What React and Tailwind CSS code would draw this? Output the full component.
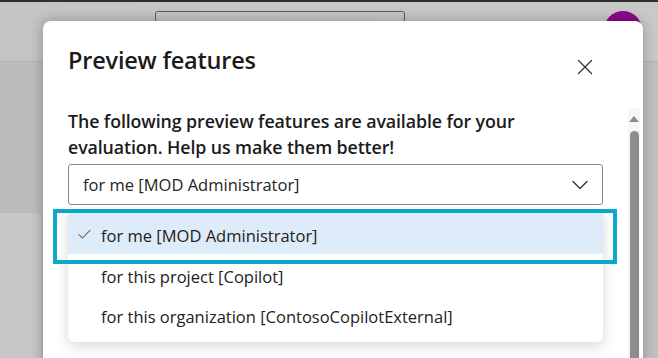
import { Check, ChevronDown, X } from "lucide-react";

const options = [
  "for me [MOD Administrator]",
  "for this project [Copilot]",
  "for this organization [ContosoCopilotExternal]",
];

const font = { fontFamily: '"Open Sans", "Noto Sans", Arial, sans-serif' };

export default function App() {
  return (
    <div
      className="relative w-[658px] h-[358px] overflow-hidden bg-[#c2c2c2]"
      style={font}
    >
      {/* dimmed page behind the dialog */}
      <div className="flex flex-col h-full">
        <div className="h-[2px] bg-[#2e2e2e]" />
        <div className="flex items-start h-[59px] bg-gradient-to-r from-[#c4c4c4] to-[#c9c9c9] pt-[9px]">
          <div className="ml-[155px] w-[250px] h-[40px] rounded-[3px] border border-[#5c5c5c]" />
          <div className="ml-auto mr-[16px] w-[38px] h-[38px] rounded-full bg-[#8a0a8a]" />
        </div>
        <div className="h-px bg-[#b4b4b4]" />
        <div className="flex-1 bg-gradient-to-r from-[#bcbcbc] to-[#c1c1c1] pt-[151px]">
          <div className="w-[41px] h-full rounded-tr-[6px] bg-[#c7c7c7]" />
        </div>
      </div>

      {/* dialog */}
      <div className="absolute left-[43px] top-[21px] w-[600px] h-[360px] bg-white rounded-t-[8px] shadow-[0_0_14px_rgba(0,0,0,0.28)] flex flex-col">
        <div className="flex justify-between items-start pl-[25px] pr-[45px] pt-[23px] h-[87px]">
          <h2 className="text-[23.5px] leading-8 font-semibold text-[#1b1b1b] tracking-[-0.2px]">
            Preview features
          </h2>
          <button className="mt-[10px] text-[#333]">
            <X size={26} strokeWidth={1.1} />
          </button>
        </div>

        <div className="flex flex-1">
          <div className="pl-[25px] w-[560px]">
            <p className="max-w-[470px] text-[17.8px] leading-[26px] font-semibold text-[#1b1b1b] tracking-[-0.1px]">
              The following preview features are available for your evaluation. Help us make them better!
            </p>
            <div className="mt-[4px] w-[535px] h-[41px] rounded-[3px] border border-[#8a8a8a] flex items-center justify-between pl-[14px] pr-[8px]">
              <span className="pt-[2px] text-[16.5px] text-[#242424]">{options[0]}</span>
              <ChevronDown size={28} strokeWidth={1.2} className="text-[#333]" />
            </div>
          </div>
          <div className="ml-auto mr-[3px] w-[12px] bg-[#f6f6f6] flex flex-col items-center pt-[8px]">
            <div className="w-0 h-0 border-l-[5px] border-r-[5px] border-b-[6px] border-l-transparent border-r-transparent border-b-[#8c8c8c]" />
            <div className="mt-[9px] w-[9px] flex-1 rounded-t-full bg-[#8c8c8c]" />
          </div>
        </div>

        {/* open listbox */}
        <div className="absolute left-[25px] top-[189px] w-[535px] pt-[3px] pb-[7px] bg-white rounded-[6px] shadow-[0_4px_14px_rgba(0,0,0,0.16)]">
          {options.map((o, i) => (
            <div
              key={o}
              className={`relative flex items-center h-[41px] pl-[33px] pt-[5px] text-[16.5px] text-[#222] ${
                i === 0 ? "bg-[#deebf8]" : ""
              } ${i === 2 ? "mt-[-1px]" : ""}`}
            >
              {i === 0 && (
                <Check
                  size={17}
                  strokeWidth={1.4}
                  className="absolute left-[8px] top-[13px] text-[#2a2a2a]"
                />
              )}
              {o}
            </div>
          ))}
        </div>
        <div className="absolute left-[10px] top-[188px] w-[564px] h-[55px] border-[4px] border-[#0aa9cc] pointer-events-none" />
      </div>
    </div>
  );
}
